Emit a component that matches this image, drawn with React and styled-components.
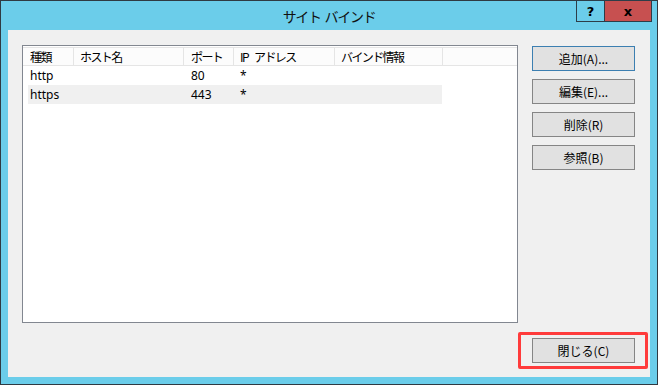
import React from "react";
import styled, { createGlobalStyle } from "styled-components";

const GlobalStyle = createGlobalStyle`
  body {
    margin: 0;
    background: #ffffff;
    font-family: "Noto Sans", "Noto Sans CJK JP", sans-serif;
  }
`;

const Window = styled.div`
  position: relative;
  box-sizing: border-box;
  width: 658px;
  height: 385px;
  border: 1px solid #2f3a42;
  background: #6bcdea;
  display: flex;
  flex-direction: column;
`;

const TitleBar = styled.div`
  height: 29px;
  display: flex;
  align-items: center;
  justify-content: center;
  font-size: 14px;
  letter-spacing: -1.3px;
  word-spacing: 2px;
  color: #111;
  font-family: "Noto Sans CJK JP", sans-serif;
  padding-top: 1px;
  box-sizing: border-box;
`;

const CaptionButtons = styled.div`
  position: absolute;
  top: -1px;
  right: 5px;
  display: flex;
  height: 22px;
`;

const CaptionButton = styled.div`
  box-sizing: border-box;
  width: ${(p) => p.$w}px;
  height: 22px;
  border: 1px solid #2d3d48;
  border-left-width: ${(p) => (p.$first ? 1 : 0)}px;
  background: ${(p) => p.$bg};
  display: flex;
  align-items: center;
  justify-content: center;
  font-family: "DejaVu Sans", sans-serif;
  font-weight: bold;
  font-size: 13px;
  color: #000;
`;

const Client = styled.div`
  box-sizing: border-box;
  margin: 0 7px;
  width: 642px;
  height: 347px;
  background: #f0f0f0;
  display: flex;
  flex-direction: column;
  padding: 15px 0 0 14px;
`;

const TopRow = styled.div`
  display: flex;
  gap: 14px;
`;

const ListBox = styled.div`
  box-sizing: border-box;
  width: 496px;
  height: 278px;
  border: 1px solid #828790;
  background: #fff;
  display: flex;
  flex-direction: column;
  font-family: "Noto Sans", "Noto Sans CJK JP", sans-serif;
  font-size: 12px;
  color: #000;
`;

const HeaderRow = styled.div`
  display: flex;
  height: 19px;
  margin-top: 1px;
  box-sizing: border-box;
  background: #fcfcfc;
  border-top: 1px solid #e5e5e5;
  border-bottom: 1px solid #e5e5e5;
`;

const HeaderCell = styled.div`
  box-sizing: border-box;
  width: ${(p) => p.$w}px;
  flex: ${(p) => (p.$fill ? "1" : "none")};
  padding-left: ${(p) => p.$pad}px;
  border-right: ${(p) => (p.$fill ? "none" : "1px solid #e5e5e5")};
  display: flex;
  align-items: center;
  white-space: pre;
  font-family: "Noto Sans CJK JP", sans-serif;
  font-size: 12px;
  letter-spacing: -1.6px;
  word-spacing: 5px;
`;

const DataRow = styled.div`
  display: flex;
  height: 19px;
  margin-left: 5px;
  width: 414px;
  background: ${(p) => (p.$alt ? "#f0f0f0" : "transparent")};
`;

const Cell = styled.div`
  box-sizing: border-box;
  width: ${(p) => p.$w}px;
  padding-left: ${(p) => p.$pad}px;
  display: flex;
  align-items: center;
  white-space: nowrap;
`;

const ButtonColumn = styled.div`
  display: flex;
  flex-direction: column;
  gap: 8px;
  padding-top: 1px;
`;

const Button = styled.div`
  box-sizing: border-box;
  width: 103px;
  height: 25px;
  border: 1px solid ${(p) => (p.$default ? "#3c7fb1" : "#858585")};
  background: #e1e1e1;
  display: flex;
  align-items: center;
  justify-content: center;
  font-family: "Noto Sans CJK JP", sans-serif;
  font-size: 12px;
  color: #000;
`;

const BottomRow = styled.div`
  display: flex;
  justify-content: flex-end;
  margin-top: 9px;
  padding-right: 2px;
`;

const Highlight = styled.div`
  box-sizing: border-box;
  width: 130px;
  height: 37px;
  border: 3px solid #ff3b3b;
  border-radius: 2px;
  padding: 3px 0 0 11px;
`;

const headers = [
  { label: "種類", w: 51, pad: 7 },
  { label: "ホスト名", w: 110, pad: 6 },
  { label: "ポート", w: 50, pad: 7 },
  { label: "IP アドレス", w: 101, pad: 6 },
  { label: "バインド情報", w: 108, pad: 6 },
];

const bindings = [
  { type: "http", host: "", port: "80", ip: "*", info: "" },
  { type: "https", host: "", port: "443", ip: "*", info: "" },
];

const rowCols = [46, 110, 50, 101, 107];

export default function App() {
  return (
    <>
      <GlobalStyle />
      <Window>
        <TitleBar>サイト バインド</TitleBar>
        <CaptionButtons>
          <CaptionButton $w={29} $first $bg="#6bcdea">?</CaptionButton>
          <CaptionButton $w={47} $bg="#c75050">x</CaptionButton>
        </CaptionButtons>
        <Client>
          <TopRow>
            <ListBox>
              <HeaderRow>
                {headers.map((h) => (
                  <HeaderCell key={h.label} $w={h.w} $pad={h.pad}>
                    {h.label}
                  </HeaderCell>
                ))}
                <HeaderCell $fill $pad={0} />
              </HeaderRow>
              {bindings.map((b, i) => (
                <DataRow key={b.type} $alt={i % 2 === 1}>
                  <Cell $w={rowCols[0]} $pad={2}>{b.type}</Cell>
                  <Cell $w={rowCols[1]} $pad={6}>{b.host}</Cell>
                  <Cell $w={rowCols[2]} $pad={7}>{b.port}</Cell>
                  <Cell $w={rowCols[3]} $pad={6}>{b.ip}</Cell>
                  <Cell $w={rowCols[4]} $pad={6}>{b.info}</Cell>
                </DataRow>
              ))}
            </ListBox>
            <ButtonColumn>
              <Button $default>追加(A)...</Button>
              <Button>編集(E)...</Button>
              <Button>削除(R)</Button>
              <Button>参照(B)</Button>
            </ButtonColumn>
          </TopRow>
          <BottomRow>
            <Highlight>
              <Button>閉じる(C)</Button>
            </Highlight>
          </BottomRow>
        </Client>
      </Window>
    </>
  );
}
